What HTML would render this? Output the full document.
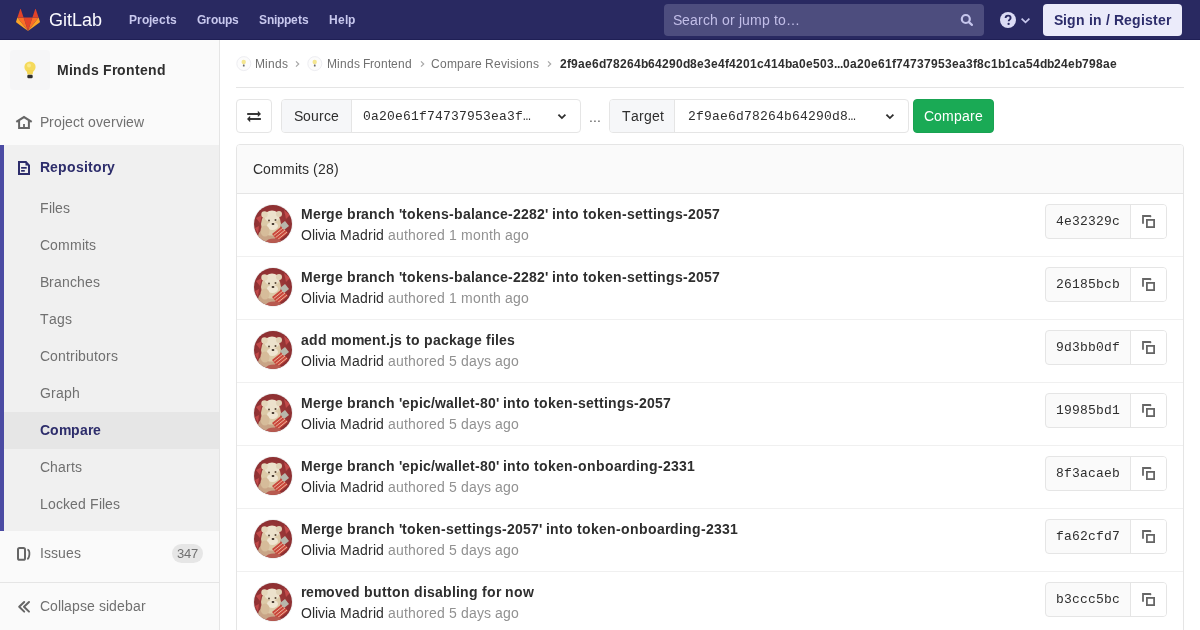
<!DOCTYPE html>
<html><head><meta charset="utf-8"><title>Compare</title>
<style>
*{box-sizing:border-box;margin:0;padding:0}
html,body{width:1200px;height:630px;overflow:hidden;background:#fff}
body{position:relative;font-family:"Liberation Sans",sans-serif}
.t{position:absolute;white-space:nowrap;line-height:20px;will-change:transform}
.t i{display:inline-block;font-style:normal;overflow:visible}
.r{position:absolute}
svg{position:absolute;overflow:visible}
</style></head><body>
<div class="r" style="left:0px;top:0px;width:1200px;height:40px;background:#292961"></div>
<div class="r" style="left:0px;top:39px;width:1200px;height:1px;background:#1f1f55"></div>
<svg style="left:16px;top:9px" width="24" height="22" viewBox="0 0 24 22">
<path fill="#e24329" d="M12 22 L16.4 8.5 H7.6 Z"/>
<path fill="#fc6d26" d="M12 22 L7.6 8.5 H1.4 Z"/>
<path fill="#fca326" d="M1.4 8.5 L0.1 12.5 C0 12.9 0.1 13.3 0.4 13.5 L12 22 Z"/>
<path fill="#e24329" d="M1.4 8.5 H7.6 L4.9 0.4 C4.8 0 4.2 0 4.1 0.4 Z"/>
<path fill="#fc6d26" d="M12 22 L16.4 8.5 H22.6 Z"/>
<path fill="#fca326" d="M22.6 8.5 L23.9 12.5 C24 12.9 23.9 13.3 23.6 13.5 L12 22 Z"/>
<path fill="#e24329" d="M22.6 8.5 H16.4 L19.1 0.4 C19.2 0 19.8 0 19.9 0.4 Z"/>
</svg>
<div class="t" style="left:49px;top:10px;font-size:18px;color:#fafaff;font-weight:normal;font-family:'Liberation Sans', sans-serif;"><i style="width:14px">G</i><i style="width:4px">i</i><i style="width:5px">t</i><i style="width:10px">L</i><i style="width:10px">a</i><i style="width:10px">b</i></div>
<div class="t" style="left:129px;top:10px;font-size:12px;color:#c8c8ee;font-weight:bold;font-family:'Liberation Sans', sans-serif;"><i style="width:8px">P</i><i style="width:5px">r</i><i style="width:7px">o</i><i style="width:3px">j</i><i style="width:7px">e</i><i style="width:7px">c</i><i style="width:4px">t</i><i style="width:7px">s</i></div>
<div class="t" style="left:197px;top:10px;font-size:12px;color:#c8c8ee;font-weight:bold;font-family:'Liberation Sans', sans-serif;"><i style="width:9px">G</i><i style="width:5px">r</i><i style="width:7px">o</i><i style="width:7px">u</i><i style="width:7px">p</i><i style="width:7px">s</i></div>
<div class="t" style="left:259px;top:10px;font-size:12px;color:#c8c8ee;font-weight:bold;font-family:'Liberation Sans', sans-serif;"><i style="width:8px">S</i><i style="width:7px">n</i><i style="width:3px">i</i><i style="width:7px">p</i><i style="width:7px">p</i><i style="width:7px">e</i><i style="width:4px">t</i><i style="width:7px">s</i></div>
<div class="t" style="left:329px;top:10px;font-size:12px;color:#c8c8ee;font-weight:bold;font-family:'Liberation Sans', sans-serif;"><i style="width:9px">H</i><i style="width:7px">e</i><i style="width:3px">l</i><i style="width:7px">p</i></div>
<div class="r" style="left:664px;top:4px;width:320px;height:32px;background:#4d4d7e;border-radius:4px"></div>
<div class="t" style="left:673px;top:10px;font-size:14px;color:#c2bee8;font-weight:normal;font-family:'Liberation Sans', sans-serif;"><i style="width:9px">S</i><i style="width:8px">e</i><i style="width:8px">a</i><i style="width:5px">r</i><i style="width:7px">c</i><i style="width:8px">h</i><i style="width:4px">&nbsp;</i><i style="width:8px">o</i><i style="width:5px">r</i><i style="width:4px">&nbsp;</i><i style="width:3px">j</i><i style="width:8px">u</i><i style="width:12px">m</i><i style="width:8px">p</i><i style="width:4px">&nbsp;</i><i style="width:4px">t</i><i style="width:8px">o</i><i style="width:14px">…</i></div>
<svg style="left:960px;top:13px" width="14" height="14" viewBox="0 0 14 14">
<circle cx="5.8" cy="6" r="4" fill="none" stroke="#c6c6ec" stroke-width="2.2"/>
<path d="M8.9 9.1 L11.9 11.9" stroke="#c6c6ec" stroke-width="2.2" stroke-linecap="round"/>
</svg>
<svg style="left:1000px;top:12px" width="32" height="16" viewBox="0 0 32 16">
<circle cx="8" cy="8" r="8" fill="#dcdcf5"/>
<path d="M5.6 6.1 C5.6 4.6 6.7 3.6 8.1 3.6 C9.6 3.6 10.6 4.6 10.6 5.9 C10.6 7.6 8.7 7.7 8.7 9.3" fill="none" stroke="#292961" stroke-width="1.9" stroke-linecap="butt"/>
<circle cx="8.6" cy="11.9" r="1.15" fill="#292961"/>
<path d="M21.6 6.6 L25.5 10.4 L29.4 6.6" fill="none" stroke="#c6c6ec" stroke-width="1.7"/>
</svg>
<div class="r" style="left:1043px;top:4px;width:139px;height:32px;background:#ebebfa;border-radius:4px"></div>
<div class="t" style="left:1054px;top:10px;font-size:14px;color:#2d2d6b;font-weight:bold;font-family:'Liberation Sans', sans-serif;"><i style="width:9px">S</i><i style="width:4px">i</i><i style="width:9px">g</i><i style="width:9px">n</i><i style="width:4px">&nbsp;</i><i style="width:4px">i</i><i style="width:9px">n</i><i style="width:4px">&nbsp;</i><i style="width:4px">/</i><i style="width:4px">&nbsp;</i><i style="width:10px">R</i><i style="width:8px">e</i><i style="width:9px">g</i><i style="width:4px">i</i><i style="width:8px">s</i><i style="width:5px">t</i><i style="width:8px">e</i><i style="width:5px">r</i></div>
<div class="r" style="left:0px;top:40px;width:220px;height:590px;background:#fafafa;border-right:1px solid #e5e5e5"></div>
<div class="r" style="left:10px;top:50px;width:40px;height:40px;background:#f6f6f7;border-radius:4px"></div>
<svg style="left:22px;top:60px" width="16" height="20" viewBox="0 0 16 20">
<circle cx="8" cy="7" r="5.6" fill="#f5da5c"/>
<path d="M4.6 10 L11.4 10 L10.6 14.6 L5.4 14.6 Z" fill="#f2d452"/>
<circle cx="7" cy="5.4" r="2" fill="#fbe98a"/>
<rect x="5.3" y="14.8" width="5.4" height="3.4" rx="1.2" fill="#2e2e2e"/>
</svg>
<div class="t" style="left:57px;top:60px;font-size:14px;color:#2e2e2e;font-weight:bold;font-family:'Liberation Sans', sans-serif;"><i style="width:12px">M</i><i style="width:4px">i</i><i style="width:9px">n</i><i style="width:9px">d</i><i style="width:8px">s</i><i style="width:4px">&nbsp;</i><i style="width:9px">F</i><i style="width:5px">r</i><i style="width:9px">o</i><i style="width:9px">n</i><i style="width:5px">t</i><i style="width:8px">e</i><i style="width:9px">n</i><i style="width:9px">d</i></div>
<svg style="left:12px;top:110px" width="24" height="24" viewBox="0 0 24 24">
<path d="M4.3 11.8 L12 7 L19.7 11.8" fill="none" stroke="#666" stroke-width="2.1" stroke-linejoin="miter"/>
<path d="M7.1 10.2 V18 H16.9 V10.2" fill="none" stroke="#666" stroke-width="2"/>
<rect x="11.1" y="14" width="1.8" height="4" fill="#666"/>
</svg>
<div class="t" style="left:40px;top:112px;font-size:14px;color:#707070;font-weight:normal;font-family:'Liberation Sans', sans-serif;"><i style="width:9px">P</i><i style="width:5px">r</i><i style="width:8px">o</i><i style="width:3px">j</i><i style="width:8px">e</i><i style="width:7px">c</i><i style="width:4px">t</i><i style="width:4px">&nbsp;</i><i style="width:8px">o</i><i style="width:7px">v</i><i style="width:8px">e</i><i style="width:5px">r</i><i style="width:7px">v</i><i style="width:3px">i</i><i style="width:8px">e</i><i style="width:10px">w</i></div>
<div class="r" style="left:0px;top:145px;width:219px;height:386px;background:#f0f0f0"></div>
<div class="r" style="left:0px;top:145px;width:4px;height:386px;background:#4b4ba3"></div>
<svg style="left:12px;top:156px" width="24" height="24" viewBox="0 0 24 24">
<path d="M7 6 H13.9 L17 9.3 V18 H7 Z" fill="none" stroke="#2d2d6b" stroke-width="2" stroke-linejoin="miter"/>
<path d="M13.5 5.5 L17.5 9.5 L13.5 9.5 Z" fill="#2d2d6b"/>
<rect x="9.1" y="11" width="5.6" height="1.7" fill="#2d2d6b"/>
<rect x="9.1" y="14" width="3.7" height="1.7" fill="#2d2d6b"/>
</svg>
<div class="t" style="left:40px;top:157px;font-size:14px;color:#2d2d6b;font-weight:bold;font-family:'Liberation Sans', sans-serif;"><i style="width:10px">R</i><i style="width:8px">e</i><i style="width:9px">p</i><i style="width:9px">o</i><i style="width:8px">s</i><i style="width:4px">i</i><i style="width:5px">t</i><i style="width:9px">o</i><i style="width:5px">r</i><i style="width:8px">y</i></div>
<div class="r" style="left:4px;top:412px;width:215px;height:37px;background:#e6e6e6"></div>
<div class="t" style="left:40px;top:198px;font-size:14px;color:#707070;font-weight:normal;font-family:'Liberation Sans', sans-serif;"><i style="width:9px">F</i><i style="width:3px">i</i><i style="width:3px">l</i><i style="width:8px">e</i><i style="width:7px">s</i></div>
<div class="t" style="left:40px;top:235px;font-size:14px;color:#707070;font-weight:normal;font-family:'Liberation Sans', sans-serif;"><i style="width:10px">C</i><i style="width:8px">o</i><i style="width:12px">m</i><i style="width:12px">m</i><i style="width:3px">i</i><i style="width:4px">t</i><i style="width:7px">s</i></div>
<div class="t" style="left:40px;top:272px;font-size:14px;color:#707070;font-weight:normal;font-family:'Liberation Sans', sans-serif;"><i style="width:9px">B</i><i style="width:5px">r</i><i style="width:8px">a</i><i style="width:8px">n</i><i style="width:7px">c</i><i style="width:8px">h</i><i style="width:8px">e</i><i style="width:7px">s</i></div>
<div class="t" style="left:40px;top:309px;font-size:14px;color:#707070;font-weight:normal;font-family:'Liberation Sans', sans-serif;"><i style="width:9px">T</i><i style="width:8px">a</i><i style="width:8px">g</i><i style="width:7px">s</i></div>
<div class="t" style="left:40px;top:346px;font-size:14px;color:#707070;font-weight:normal;font-family:'Liberation Sans', sans-serif;"><i style="width:10px">C</i><i style="width:8px">o</i><i style="width:8px">n</i><i style="width:4px">t</i><i style="width:5px">r</i><i style="width:3px">i</i><i style="width:8px">b</i><i style="width:8px">u</i><i style="width:4px">t</i><i style="width:8px">o</i><i style="width:5px">r</i><i style="width:7px">s</i></div>
<div class="t" style="left:40px;top:383px;font-size:14px;color:#707070;font-weight:normal;font-family:'Liberation Sans', sans-serif;"><i style="width:11px">G</i><i style="width:5px">r</i><i style="width:8px">a</i><i style="width:8px">p</i><i style="width:8px">h</i></div>
<div class="t" style="left:40px;top:420px;font-size:14px;color:#2d2d6b;font-weight:bold;font-family:'Liberation Sans', sans-serif;"><i style="width:10px">C</i><i style="width:9px">o</i><i style="width:12px">m</i><i style="width:9px">p</i><i style="width:8px">a</i><i style="width:5px">r</i><i style="width:8px">e</i></div>
<div class="t" style="left:40px;top:457px;font-size:14px;color:#707070;font-weight:normal;font-family:'Liberation Sans', sans-serif;"><i style="width:10px">C</i><i style="width:8px">h</i><i style="width:8px">a</i><i style="width:5px">r</i><i style="width:4px">t</i><i style="width:7px">s</i></div>
<div class="t" style="left:40px;top:494px;font-size:14px;color:#707070;font-weight:normal;font-family:'Liberation Sans', sans-serif;"><i style="width:8px">L</i><i style="width:8px">o</i><i style="width:7px">c</i><i style="width:7px">k</i><i style="width:8px">e</i><i style="width:8px">d</i><i style="width:4px">&nbsp;</i><i style="width:9px">F</i><i style="width:3px">i</i><i style="width:3px">l</i><i style="width:8px">e</i><i style="width:7px">s</i></div>
<svg style="left:12px;top:542px" width="24" height="24" viewBox="0 0 24 24">
<rect x="6" y="6" width="7" height="11.8" rx="1.6" fill="none" stroke="#666" stroke-width="2"/>
<path d="M15.4 7.6 C17.4 8 17.6 9.5 17.4 12.3 C17.2 15.3 16.8 16.6 15.3 17.2" fill="none" stroke="#666" stroke-width="1.8"/>
</svg>
<div class="t" style="left:40px;top:543px;font-size:14px;color:#707070;font-weight:normal;font-family:'Liberation Sans', sans-serif;"><i style="width:4px">I</i><i style="width:7px">s</i><i style="width:7px">s</i><i style="width:8px">u</i><i style="width:8px">e</i><i style="width:7px">s</i></div>
<div class="r" style="left:172px;top:544px;width:31px;height:19px;background:#e6e6e6;border-radius:10px"></div>
<div class="t" style="left:177px;top:543.5px;font-size:13px;color:#707070;font-weight:normal;font-family:'Liberation Sans', sans-serif;"><i style="width:7px">3</i><i style="width:7px">4</i><i style="width:7px">7</i></div>
<div class="r" style="left:0px;top:582px;width:219px;height:1px;background:#e5e5e5"></div>
<svg style="left:12px;top:595px" width="24" height="24" viewBox="0 0 24 24">
<path d="M12.2 7 L7.2 11.8 L12.2 16.6 M17 7 L12 11.8 L17 16.6" fill="none" stroke="#666" stroke-width="2" stroke-linecap="round" stroke-linejoin="round"/>
</svg>
<div class="t" style="left:40px;top:596px;font-size:14px;color:#707070;font-weight:normal;font-family:'Liberation Sans', sans-serif;"><i style="width:10px">C</i><i style="width:8px">o</i><i style="width:3px">l</i><i style="width:3px">l</i><i style="width:8px">a</i><i style="width:8px">p</i><i style="width:7px">s</i><i style="width:8px">e</i><i style="width:4px">&nbsp;</i><i style="width:7px">s</i><i style="width:3px">i</i><i style="width:8px">d</i><i style="width:8px">e</i><i style="width:8px">b</i><i style="width:8px">a</i><i style="width:5px">r</i></div>
<svg style="left:236px;top:56px" width="16" height="16" viewBox="0 0 16 16">
<circle cx="7.8" cy="7.6" r="7" fill="#fcfcfc" stroke="#eeeef2" stroke-width="1"/>
<circle cx="7.7" cy="6" r="2.2" fill="#f4e690"/>
<rect x="6.9" y="8.4" width="1.7" height="2" rx=".5" fill="#6a6a6a"/>
</svg>
<div class="t" style="left:255px;top:54px;font-size:12px;color:#707070;font-weight:normal;font-family:'Liberation Sans', sans-serif;"><i style="width:10px">M</i><i style="width:3px">i</i><i style="width:7px">n</i><i style="width:7px">d</i><i style="width:6px">s</i></div>
<svg style="left:294.5px;top:59.5px" width="6" height="8" viewBox="0 0 6 8">
<path d="M1 1.3 L3.7 4 L1 6.7" fill="none" stroke="#a8a8a8" stroke-width="1.2"/>
</svg>
<svg style="left:307px;top:56px" width="16" height="16" viewBox="0 0 16 16">
<circle cx="7.8" cy="7.6" r="7" fill="#fcfcfc" stroke="#eeeef2" stroke-width="1"/>
<circle cx="7.7" cy="6" r="2.2" fill="#f4e690"/>
<rect x="6.9" y="8.4" width="1.7" height="2" rx=".5" fill="#6a6a6a"/>
</svg>
<div class="t" style="left:327px;top:54px;font-size:12px;color:#707070;font-weight:normal;font-family:'Liberation Sans', sans-serif;"><i style="width:10px">M</i><i style="width:3px">i</i><i style="width:7px">n</i><i style="width:7px">d</i><i style="width:6px">s</i><i style="width:3px">&nbsp;</i><i style="width:7px">F</i><i style="width:4px">r</i><i style="width:7px">o</i><i style="width:7px">n</i><i style="width:3px">t</i><i style="width:7px">e</i><i style="width:7px">n</i><i style="width:7px">d</i></div>
<svg style="left:419.5px;top:59.5px" width="6" height="8" viewBox="0 0 6 8">
<path d="M1 1.3 L3.7 4 L1 6.7" fill="none" stroke="#a8a8a8" stroke-width="1.2"/>
</svg>
<div class="t" style="left:431px;top:54px;font-size:12px;color:#707070;font-weight:normal;font-family:'Liberation Sans', sans-serif;"><i style="width:9px">C</i><i style="width:7px">o</i><i style="width:10px">m</i><i style="width:7px">p</i><i style="width:7px">a</i><i style="width:4px">r</i><i style="width:7px">e</i><i style="width:3px">&nbsp;</i><i style="width:9px">R</i><i style="width:7px">e</i><i style="width:6px">v</i><i style="width:3px">i</i><i style="width:6px">s</i><i style="width:3px">i</i><i style="width:7px">o</i><i style="width:7px">n</i><i style="width:6px">s</i></div>
<svg style="left:546.5px;top:59.5px" width="6" height="8" viewBox="0 0 6 8">
<path d="M1 1.3 L3.7 4 L1 6.7" fill="none" stroke="#a8a8a8" stroke-width="1.2"/>
</svg>
<div class="t" style="left:560px;top:54px;font-size:12px;color:#2e2e2e;font-weight:bold;font-family:'Liberation Sans', sans-serif;"><i style="width:7px">2</i><i style="width:4px">f</i><i style="width:7px">9</i><i style="width:7px">a</i><i style="width:7px">e</i><i style="width:7px">6</i><i style="width:7px">d</i><i style="width:7px">7</i><i style="width:7px">8</i><i style="width:7px">2</i><i style="width:7px">6</i><i style="width:7px">4</i><i style="width:7px">b</i><i style="width:7px">6</i><i style="width:7px">4</i><i style="width:7px">2</i><i style="width:7px">9</i><i style="width:7px">0</i><i style="width:7px">d</i><i style="width:7px">8</i><i style="width:7px">e</i><i style="width:7px">3</i><i style="width:7px">e</i><i style="width:7px">4</i><i style="width:4px">f</i><i style="width:7px">4</i><i style="width:7px">2</i><i style="width:7px">0</i><i style="width:7px">1</i><i style="width:7px">c</i><i style="width:7px">4</i><i style="width:7px">1</i><i style="width:7px">4</i><i style="width:7px">b</i><i style="width:7px">a</i><i style="width:7px">0</i><i style="width:7px">e</i><i style="width:7px">5</i><i style="width:7px">0</i><i style="width:7px">3</i><i style="width:3px">.</i><i style="width:3px">.</i><i style="width:3px">.</i><i style="width:7px">0</i><i style="width:7px">a</i><i style="width:7px">2</i><i style="width:7px">0</i><i style="width:7px">e</i><i style="width:7px">6</i><i style="width:7px">1</i><i style="width:4px">f</i><i style="width:7px">7</i><i style="width:7px">4</i><i style="width:7px">7</i><i style="width:7px">3</i><i style="width:7px">7</i><i style="width:7px">9</i><i style="width:7px">5</i><i style="width:7px">3</i><i style="width:7px">e</i><i style="width:7px">a</i><i style="width:7px">3</i><i style="width:4px">f</i><i style="width:7px">8</i><i style="width:7px">c</i><i style="width:7px">1</i><i style="width:7px">b</i><i style="width:7px">1</i><i style="width:7px">c</i><i style="width:7px">a</i><i style="width:7px">5</i><i style="width:7px">4</i><i style="width:7px">d</i><i style="width:7px">b</i><i style="width:7px">2</i><i style="width:7px">4</i><i style="width:7px">e</i><i style="width:7px">b</i><i style="width:7px">7</i><i style="width:7px">9</i><i style="width:7px">8</i><i style="width:7px">a</i><i style="width:7px">e</i></div>
<div class="r" style="left:236px;top:87px;width:948px;height:1px;background:#e5e5e5"></div>
<div class="r" style="left:236px;top:99px;width:36px;height:34px;background:#fff;border:1px solid #e5e5e5;border-radius:4px"></div>
<svg style="left:242px;top:104px" width="24" height="24" viewBox="0 0 24 24">
<path d="M5.2 10 H16.6" stroke="#2e2e2e" stroke-width="1.9"/>
<path d="M15.8 6.8 L19 9.9 L15.8 13 Z" fill="#2e2e2e"/>
<path d="M7.4 15 H18.9" stroke="#2e2e2e" stroke-width="1.9"/>
<path d="M8.2 11.8 L5 15 L8.2 18.2 Z" fill="#2e2e2e"/>
</svg>
<div class="r" style="left:281px;top:99px;width:300px;height:34px;background:#fff;border:1px solid #e5e5e5;border-radius:4px"></div>
<div class="r" style="left:282px;top:100px;width:70px;height:32px;background:#f6f7f9;border-right:1px solid #e5e5e5;border-radius:3px 0 0 3px"></div>
<div class="t" style="left:294px;top:106px;font-size:14px;color:#2e2e2e;font-weight:normal;font-family:'Liberation Sans', sans-serif;"><i style="width:9px">S</i><i style="width:8px">o</i><i style="width:8px">u</i><i style="width:5px">r</i><i style="width:7px">c</i><i style="width:8px">e</i></div>
<div class="t" style="left:363px;top:107px;font-size:13px;color:#2e2e2e;font-weight:normal;font-family:'Liberation Mono', monospace;"><i style="width:8px">0</i><i style="width:8px">a</i><i style="width:8px">2</i><i style="width:8px">0</i><i style="width:8px">e</i><i style="width:8px">6</i><i style="width:8px">1</i><i style="width:8px">f</i><i style="width:8px">7</i><i style="width:8px">4</i><i style="width:8px">7</i><i style="width:8px">3</i><i style="width:8px">7</i><i style="width:8px">9</i><i style="width:8px">5</i><i style="width:8px">3</i><i style="width:8px">e</i><i style="width:8px">a</i><i style="width:8px">3</i><i style="width:8px">f</i><i style="width:8px">…</i></div>
<svg style="left:557px;top:112.5px" width="10" height="8" viewBox="0 0 10 8">
<path d="M1.4 1.6 L4.9 5.1 L8.4 1.6" fill="none" stroke="#2e2e2e" stroke-width="1.8"/>
</svg>
<div class="t" style="left:589px;top:106.5px;font-size:14px;color:#5c5c5c;font-weight:normal;font-family:'Liberation Sans', sans-serif;"><i style="width:4px">.</i><i style="width:4px">.</i><i style="width:4px">.</i></div>
<div class="r" style="left:609px;top:99px;width:300px;height:34px;background:#fff;border:1px solid #e5e5e5;border-radius:4px"></div>
<div class="r" style="left:610px;top:100px;width:65px;height:32px;background:#f6f7f9;border-right:1px solid #e5e5e5;border-radius:3px 0 0 3px"></div>
<div class="t" style="left:622px;top:106px;font-size:14px;color:#2e2e2e;font-weight:normal;font-family:'Liberation Sans', sans-serif;"><i style="width:9px">T</i><i style="width:8px">a</i><i style="width:5px">r</i><i style="width:8px">g</i><i style="width:8px">e</i><i style="width:4px">t</i></div>
<div class="t" style="left:688px;top:107px;font-size:13px;color:#2e2e2e;font-weight:normal;font-family:'Liberation Mono', monospace;"><i style="width:8px">2</i><i style="width:8px">f</i><i style="width:8px">9</i><i style="width:8px">a</i><i style="width:8px">e</i><i style="width:8px">6</i><i style="width:8px">d</i><i style="width:8px">7</i><i style="width:8px">8</i><i style="width:8px">2</i><i style="width:8px">6</i><i style="width:8px">4</i><i style="width:8px">b</i><i style="width:8px">6</i><i style="width:8px">4</i><i style="width:8px">2</i><i style="width:8px">9</i><i style="width:8px">0</i><i style="width:8px">d</i><i style="width:8px">8</i><i style="width:8px">…</i></div>
<svg style="left:885px;top:112.5px" width="10" height="8" viewBox="0 0 10 8">
<path d="M1.4 1.6 L4.9 5.1 L8.4 1.6" fill="none" stroke="#2e2e2e" stroke-width="1.8"/>
</svg>
<div class="r" style="left:913px;top:99px;width:81px;height:34px;background:#1aaa55;border:1px solid #19a352;border-radius:4px"></div>
<div class="t" style="left:924px;top:106px;font-size:14px;color:#fff;font-weight:normal;font-family:'Liberation Sans', sans-serif;"><i style="width:10px">C</i><i style="width:8px">o</i><i style="width:12px">m</i><i style="width:8px">p</i><i style="width:8px">a</i><i style="width:5px">r</i><i style="width:8px">e</i></div>
<div class="r" style="left:236px;top:144px;width:948px;height:500px;background:#fff;border:1px solid #e5e5e5;border-radius:4px"></div>
<div class="r" style="left:237px;top:145px;width:946px;height:48px;background:#fafafa;border-radius:3px 3px 0 0"></div>
<div class="r" style="left:237px;top:193px;width:946px;height:1px;background:#e5e5e5"></div>
<div class="t" style="left:253px;top:159px;font-size:14px;color:#2e2e2e;font-weight:normal;font-family:'Liberation Sans', sans-serif;"><i style="width:10px">C</i><i style="width:8px">o</i><i style="width:12px">m</i><i style="width:12px">m</i><i style="width:3px">i</i><i style="width:4px">t</i><i style="width:7px">s</i><i style="width:4px">&nbsp;</i><i style="width:5px">(</i><i style="width:8px">2</i><i style="width:8px">8</i><i style="width:5px">)</i></div>
<svg style="left:253px;top:204px" width="40" height="40" viewBox="0 0 40 40">
<defs><clipPath id="c0"><circle cx="20" cy="20" r="19"/></clipPath>
<filter id="f0" x="-10%" y="-10%" width="120%" height="120%"><feGaussianBlur stdDeviation="0.5"/></filter>
<radialGradient id="g0" cx="0.5" cy="0.5" r="0.6"><stop offset="0" stop-color="#a8403e"/><stop offset="0.75" stop-color="#8e3032"/><stop offset="1" stop-color="#6a1c1e"/></radialGradient></defs>
<g clip-path="url(#c0)">
<rect x="0" y="0" width="40" height="40" fill="url(#g0)"/>
<g filter="url(#f0)">
<path d="M3 14 L9 11 L7 19 Z M31 6 L37 11 L33 15 Z M2 24 L6 22 L5 30 Z" fill="#c04848"/>
<ellipse cx="14" cy="32" rx="9" ry="7" fill="#c8a486"/>
<ellipse cx="18" cy="20" rx="10" ry="11.5" fill="#dccaa8"/>
<ellipse cx="19" cy="12.5" rx="7.5" ry="6" fill="#ece2cc"/>
<circle cx="11.5" cy="10.5" r="3.2" fill="#e4d6ba"/>
<circle cx="26" cy="10" r="3" fill="#e0d2b6"/>
<ellipse cx="19.5" cy="22" rx="5.5" ry="4" fill="#f0e6d2"/>
<circle cx="16" cy="16.5" r="1" fill="#5a4838"/>
<circle cx="22.5" cy="16" r="1" fill="#5a4838"/>
<ellipse cx="20" cy="20" rx="1.4" ry="1.1" fill="#3a2a22"/>
<ellipse cx="12" cy="27" rx="4.5" ry="5.5" fill="#d6bc9a"/>
<path d="M19 30 L29 22 L35 29 L25 37 Z" fill="#c8463a"/>
<path d="M20.6 31.6 L30 24 M22.6 33.6 L32 26 M24.6 35.6 L34 28" stroke="#eeb49c" stroke-width="1"/>
<path d="M27 21 L32 17 L36 22 L31 26 Z" fill="#b8b8ac"/>
<ellipse cx="21" cy="38" rx="8" ry="3.5" fill="#b85a50"/>
</g></g>
<circle cx="20" cy="20" r="19.5" fill="none" stroke="rgba(0,0,0,0.06)" stroke-width="1"/>
</svg>
<div class="t" style="left:301px;top:204px;font-size:14px;color:#2e2e2e;font-weight:bold;font-family:'Liberation Sans', sans-serif;"><i style="width:12px">M</i><i style="width:8px">e</i><i style="width:5px">r</i><i style="width:9px">g</i><i style="width:8px">e</i><i style="width:4px">&nbsp;</i><i style="width:9px">b</i><i style="width:5px">r</i><i style="width:8px">a</i><i style="width:9px">n</i><i style="width:8px">c</i><i style="width:9px">h</i><i style="width:4px">&nbsp;</i><i style="width:3px">&#x27;</i><i style="width:5px">t</i><i style="width:9px">o</i><i style="width:8px">k</i><i style="width:8px">e</i><i style="width:9px">n</i><i style="width:8px">s</i><i style="width:5px">-</i><i style="width:9px">b</i><i style="width:8px">a</i><i style="width:4px">l</i><i style="width:8px">a</i><i style="width:9px">n</i><i style="width:8px">c</i><i style="width:8px">e</i><i style="width:5px">-</i><i style="width:8px">2</i><i style="width:8px">2</i><i style="width:8px">8</i><i style="width:8px">2</i><i style="width:3px">&#x27;</i><i style="width:4px">&nbsp;</i><i style="width:4px">i</i><i style="width:9px">n</i><i style="width:5px">t</i><i style="width:9px">o</i><i style="width:4px">&nbsp;</i><i style="width:5px">t</i><i style="width:9px">o</i><i style="width:8px">k</i><i style="width:8px">e</i><i style="width:9px">n</i><i style="width:5px">-</i><i style="width:8px">s</i><i style="width:8px">e</i><i style="width:5px">t</i><i style="width:5px">t</i><i style="width:4px">i</i><i style="width:9px">n</i><i style="width:9px">g</i><i style="width:8px">s</i><i style="width:5px">-</i><i style="width:8px">2</i><i style="width:8px">0</i><i style="width:8px">5</i><i style="width:8px">7</i></div>
<div class="t" style="left:301px;top:225px;font-size:14px;color:#2e2e2e;font-weight:normal;font-family:'Liberation Sans', sans-serif;"><i style="width:11px">O</i><i style="width:3px">l</i><i style="width:3px">i</i><i style="width:7px">v</i><i style="width:3px">i</i><i style="width:8px">a</i><i style="width:4px">&nbsp;</i><i style="width:12px">M</i><i style="width:8px">a</i><i style="width:8px">d</i><i style="width:5px">r</i><i style="width:3px">i</i><i style="width:8px">d</i><i style="width:4px">&nbsp;</i><b style="color:#919191;font-weight:inherit"><i style="width:8px">a</i><i style="width:8px">u</i><i style="width:4px">t</i><i style="width:8px">h</i><i style="width:8px">o</i><i style="width:5px">r</i><i style="width:8px">e</i><i style="width:8px">d</i><i style="width:4px">&nbsp;</i><i style="width:8px">1</i><i style="width:4px">&nbsp;</i><i style="width:12px">m</i><i style="width:8px">o</i><i style="width:8px">n</i><i style="width:4px">t</i><i style="width:8px">h</i><i style="width:4px">&nbsp;</i><i style="width:8px">a</i><i style="width:8px">g</i><i style="width:8px">o</i></b></div>
<div class="r" style="left:1045px;top:204px;width:122px;height:35px;background:#fafafa;border:1px solid #e5e5e5;border-radius:4px"></div>
<div class="r" style="left:1130px;top:205px;width:36px;height:33px;background:#fff;border-left:1px solid #e5e5e5;border-radius:0 3px 3px 0"></div>
<div class="t" style="left:1056px;top:212px;font-size:13px;color:#2e2e2e;font-weight:normal;font-family:'Liberation Mono', monospace;"><i style="width:8px">4</i><i style="width:8px">e</i><i style="width:8px">3</i><i style="width:8px">2</i><i style="width:8px">3</i><i style="width:8px">2</i><i style="width:8px">9</i><i style="width:8px">c</i></div>
<svg style="left:1136px;top:209px" width="24" height="24" viewBox="0 0 24 24">
<path d="M7 14.7 V7 H14.2 L14.9 7.9" fill="none" stroke="#666" stroke-width="1.8"/>
<rect x="10.9" y="10.9" width="7.2" height="7.2" fill="none" stroke="#666" stroke-width="1.8"/>
</svg>
<div class="r" style="left:237px;top:256px;width:946px;height:1px;background:#f0f0f0"></div>
<svg style="left:253px;top:267px" width="40" height="40" viewBox="0 0 40 40">
<defs><clipPath id="c1"><circle cx="20" cy="20" r="19"/></clipPath>
<filter id="f1" x="-10%" y="-10%" width="120%" height="120%"><feGaussianBlur stdDeviation="0.5"/></filter>
<radialGradient id="g1" cx="0.5" cy="0.5" r="0.6"><stop offset="0" stop-color="#a8403e"/><stop offset="0.75" stop-color="#8e3032"/><stop offset="1" stop-color="#6a1c1e"/></radialGradient></defs>
<g clip-path="url(#c1)">
<rect x="0" y="0" width="40" height="40" fill="url(#g1)"/>
<g filter="url(#f1)">
<path d="M3 14 L9 11 L7 19 Z M31 6 L37 11 L33 15 Z M2 24 L6 22 L5 30 Z" fill="#c04848"/>
<ellipse cx="14" cy="32" rx="9" ry="7" fill="#c8a486"/>
<ellipse cx="18" cy="20" rx="10" ry="11.5" fill="#dccaa8"/>
<ellipse cx="19" cy="12.5" rx="7.5" ry="6" fill="#ece2cc"/>
<circle cx="11.5" cy="10.5" r="3.2" fill="#e4d6ba"/>
<circle cx="26" cy="10" r="3" fill="#e0d2b6"/>
<ellipse cx="19.5" cy="22" rx="5.5" ry="4" fill="#f0e6d2"/>
<circle cx="16" cy="16.5" r="1" fill="#5a4838"/>
<circle cx="22.5" cy="16" r="1" fill="#5a4838"/>
<ellipse cx="20" cy="20" rx="1.4" ry="1.1" fill="#3a2a22"/>
<ellipse cx="12" cy="27" rx="4.5" ry="5.5" fill="#d6bc9a"/>
<path d="M19 30 L29 22 L35 29 L25 37 Z" fill="#c8463a"/>
<path d="M20.6 31.6 L30 24 M22.6 33.6 L32 26 M24.6 35.6 L34 28" stroke="#eeb49c" stroke-width="1"/>
<path d="M27 21 L32 17 L36 22 L31 26 Z" fill="#b8b8ac"/>
<ellipse cx="21" cy="38" rx="8" ry="3.5" fill="#b85a50"/>
</g></g>
<circle cx="20" cy="20" r="19.5" fill="none" stroke="rgba(0,0,0,0.06)" stroke-width="1"/>
</svg>
<div class="t" style="left:301px;top:267px;font-size:14px;color:#2e2e2e;font-weight:bold;font-family:'Liberation Sans', sans-serif;"><i style="width:12px">M</i><i style="width:8px">e</i><i style="width:5px">r</i><i style="width:9px">g</i><i style="width:8px">e</i><i style="width:4px">&nbsp;</i><i style="width:9px">b</i><i style="width:5px">r</i><i style="width:8px">a</i><i style="width:9px">n</i><i style="width:8px">c</i><i style="width:9px">h</i><i style="width:4px">&nbsp;</i><i style="width:3px">&#x27;</i><i style="width:5px">t</i><i style="width:9px">o</i><i style="width:8px">k</i><i style="width:8px">e</i><i style="width:9px">n</i><i style="width:8px">s</i><i style="width:5px">-</i><i style="width:9px">b</i><i style="width:8px">a</i><i style="width:4px">l</i><i style="width:8px">a</i><i style="width:9px">n</i><i style="width:8px">c</i><i style="width:8px">e</i><i style="width:5px">-</i><i style="width:8px">2</i><i style="width:8px">2</i><i style="width:8px">8</i><i style="width:8px">2</i><i style="width:3px">&#x27;</i><i style="width:4px">&nbsp;</i><i style="width:4px">i</i><i style="width:9px">n</i><i style="width:5px">t</i><i style="width:9px">o</i><i style="width:4px">&nbsp;</i><i style="width:5px">t</i><i style="width:9px">o</i><i style="width:8px">k</i><i style="width:8px">e</i><i style="width:9px">n</i><i style="width:5px">-</i><i style="width:8px">s</i><i style="width:8px">e</i><i style="width:5px">t</i><i style="width:5px">t</i><i style="width:4px">i</i><i style="width:9px">n</i><i style="width:9px">g</i><i style="width:8px">s</i><i style="width:5px">-</i><i style="width:8px">2</i><i style="width:8px">0</i><i style="width:8px">5</i><i style="width:8px">7</i></div>
<div class="t" style="left:301px;top:288px;font-size:14px;color:#2e2e2e;font-weight:normal;font-family:'Liberation Sans', sans-serif;"><i style="width:11px">O</i><i style="width:3px">l</i><i style="width:3px">i</i><i style="width:7px">v</i><i style="width:3px">i</i><i style="width:8px">a</i><i style="width:4px">&nbsp;</i><i style="width:12px">M</i><i style="width:8px">a</i><i style="width:8px">d</i><i style="width:5px">r</i><i style="width:3px">i</i><i style="width:8px">d</i><i style="width:4px">&nbsp;</i><b style="color:#919191;font-weight:inherit"><i style="width:8px">a</i><i style="width:8px">u</i><i style="width:4px">t</i><i style="width:8px">h</i><i style="width:8px">o</i><i style="width:5px">r</i><i style="width:8px">e</i><i style="width:8px">d</i><i style="width:4px">&nbsp;</i><i style="width:8px">1</i><i style="width:4px">&nbsp;</i><i style="width:12px">m</i><i style="width:8px">o</i><i style="width:8px">n</i><i style="width:4px">t</i><i style="width:8px">h</i><i style="width:4px">&nbsp;</i><i style="width:8px">a</i><i style="width:8px">g</i><i style="width:8px">o</i></b></div>
<div class="r" style="left:1045px;top:267px;width:122px;height:35px;background:#fafafa;border:1px solid #e5e5e5;border-radius:4px"></div>
<div class="r" style="left:1130px;top:268px;width:36px;height:33px;background:#fff;border-left:1px solid #e5e5e5;border-radius:0 3px 3px 0"></div>
<div class="t" style="left:1056px;top:275px;font-size:13px;color:#2e2e2e;font-weight:normal;font-family:'Liberation Mono', monospace;"><i style="width:8px">2</i><i style="width:8px">6</i><i style="width:8px">1</i><i style="width:8px">8</i><i style="width:8px">5</i><i style="width:8px">b</i><i style="width:8px">c</i><i style="width:8px">b</i></div>
<svg style="left:1136px;top:272px" width="24" height="24" viewBox="0 0 24 24">
<path d="M7 14.7 V7 H14.2 L14.9 7.9" fill="none" stroke="#666" stroke-width="1.8"/>
<rect x="10.9" y="10.9" width="7.2" height="7.2" fill="none" stroke="#666" stroke-width="1.8"/>
</svg>
<div class="r" style="left:237px;top:319px;width:946px;height:1px;background:#f0f0f0"></div>
<svg style="left:253px;top:330px" width="40" height="40" viewBox="0 0 40 40">
<defs><clipPath id="c2"><circle cx="20" cy="20" r="19"/></clipPath>
<filter id="f2" x="-10%" y="-10%" width="120%" height="120%"><feGaussianBlur stdDeviation="0.5"/></filter>
<radialGradient id="g2" cx="0.5" cy="0.5" r="0.6"><stop offset="0" stop-color="#a8403e"/><stop offset="0.75" stop-color="#8e3032"/><stop offset="1" stop-color="#6a1c1e"/></radialGradient></defs>
<g clip-path="url(#c2)">
<rect x="0" y="0" width="40" height="40" fill="url(#g2)"/>
<g filter="url(#f2)">
<path d="M3 14 L9 11 L7 19 Z M31 6 L37 11 L33 15 Z M2 24 L6 22 L5 30 Z" fill="#c04848"/>
<ellipse cx="14" cy="32" rx="9" ry="7" fill="#c8a486"/>
<ellipse cx="18" cy="20" rx="10" ry="11.5" fill="#dccaa8"/>
<ellipse cx="19" cy="12.5" rx="7.5" ry="6" fill="#ece2cc"/>
<circle cx="11.5" cy="10.5" r="3.2" fill="#e4d6ba"/>
<circle cx="26" cy="10" r="3" fill="#e0d2b6"/>
<ellipse cx="19.5" cy="22" rx="5.5" ry="4" fill="#f0e6d2"/>
<circle cx="16" cy="16.5" r="1" fill="#5a4838"/>
<circle cx="22.5" cy="16" r="1" fill="#5a4838"/>
<ellipse cx="20" cy="20" rx="1.4" ry="1.1" fill="#3a2a22"/>
<ellipse cx="12" cy="27" rx="4.5" ry="5.5" fill="#d6bc9a"/>
<path d="M19 30 L29 22 L35 29 L25 37 Z" fill="#c8463a"/>
<path d="M20.6 31.6 L30 24 M22.6 33.6 L32 26 M24.6 35.6 L34 28" stroke="#eeb49c" stroke-width="1"/>
<path d="M27 21 L32 17 L36 22 L31 26 Z" fill="#b8b8ac"/>
<ellipse cx="21" cy="38" rx="8" ry="3.5" fill="#b85a50"/>
</g></g>
<circle cx="20" cy="20" r="19.5" fill="none" stroke="rgba(0,0,0,0.06)" stroke-width="1"/>
</svg>
<div class="t" style="left:301px;top:330px;font-size:14px;color:#2e2e2e;font-weight:bold;font-family:'Liberation Sans', sans-serif;"><i style="width:8px">a</i><i style="width:9px">d</i><i style="width:9px">d</i><i style="width:4px">&nbsp;</i><i style="width:12px">m</i><i style="width:9px">o</i><i style="width:12px">m</i><i style="width:8px">e</i><i style="width:9px">n</i><i style="width:5px">t</i><i style="width:4px">.</i><i style="width:4px">j</i><i style="width:8px">s</i><i style="width:4px">&nbsp;</i><i style="width:5px">t</i><i style="width:9px">o</i><i style="width:4px">&nbsp;</i><i style="width:9px">p</i><i style="width:8px">a</i><i style="width:8px">c</i><i style="width:8px">k</i><i style="width:8px">a</i><i style="width:9px">g</i><i style="width:8px">e</i><i style="width:4px">&nbsp;</i><i style="width:5px">f</i><i style="width:4px">i</i><i style="width:4px">l</i><i style="width:8px">e</i><i style="width:8px">s</i></div>
<div class="t" style="left:301px;top:351px;font-size:14px;color:#2e2e2e;font-weight:normal;font-family:'Liberation Sans', sans-serif;"><i style="width:11px">O</i><i style="width:3px">l</i><i style="width:3px">i</i><i style="width:7px">v</i><i style="width:3px">i</i><i style="width:8px">a</i><i style="width:4px">&nbsp;</i><i style="width:12px">M</i><i style="width:8px">a</i><i style="width:8px">d</i><i style="width:5px">r</i><i style="width:3px">i</i><i style="width:8px">d</i><i style="width:4px">&nbsp;</i><b style="color:#919191;font-weight:inherit"><i style="width:8px">a</i><i style="width:8px">u</i><i style="width:4px">t</i><i style="width:8px">h</i><i style="width:8px">o</i><i style="width:5px">r</i><i style="width:8px">e</i><i style="width:8px">d</i><i style="width:4px">&nbsp;</i><i style="width:8px">5</i><i style="width:4px">&nbsp;</i><i style="width:8px">d</i><i style="width:8px">a</i><i style="width:7px">y</i><i style="width:7px">s</i><i style="width:4px">&nbsp;</i><i style="width:8px">a</i><i style="width:8px">g</i><i style="width:8px">o</i></b></div>
<div class="r" style="left:1045px;top:330px;width:122px;height:35px;background:#fafafa;border:1px solid #e5e5e5;border-radius:4px"></div>
<div class="r" style="left:1130px;top:331px;width:36px;height:33px;background:#fff;border-left:1px solid #e5e5e5;border-radius:0 3px 3px 0"></div>
<div class="t" style="left:1056px;top:338px;font-size:13px;color:#2e2e2e;font-weight:normal;font-family:'Liberation Mono', monospace;"><i style="width:8px">9</i><i style="width:8px">d</i><i style="width:8px">3</i><i style="width:8px">b</i><i style="width:8px">b</i><i style="width:8px">0</i><i style="width:8px">d</i><i style="width:8px">f</i></div>
<svg style="left:1136px;top:335px" width="24" height="24" viewBox="0 0 24 24">
<path d="M7 14.7 V7 H14.2 L14.9 7.9" fill="none" stroke="#666" stroke-width="1.8"/>
<rect x="10.9" y="10.9" width="7.2" height="7.2" fill="none" stroke="#666" stroke-width="1.8"/>
</svg>
<div class="r" style="left:237px;top:382px;width:946px;height:1px;background:#f0f0f0"></div>
<svg style="left:253px;top:393px" width="40" height="40" viewBox="0 0 40 40">
<defs><clipPath id="c3"><circle cx="20" cy="20" r="19"/></clipPath>
<filter id="f3" x="-10%" y="-10%" width="120%" height="120%"><feGaussianBlur stdDeviation="0.5"/></filter>
<radialGradient id="g3" cx="0.5" cy="0.5" r="0.6"><stop offset="0" stop-color="#a8403e"/><stop offset="0.75" stop-color="#8e3032"/><stop offset="1" stop-color="#6a1c1e"/></radialGradient></defs>
<g clip-path="url(#c3)">
<rect x="0" y="0" width="40" height="40" fill="url(#g3)"/>
<g filter="url(#f3)">
<path d="M3 14 L9 11 L7 19 Z M31 6 L37 11 L33 15 Z M2 24 L6 22 L5 30 Z" fill="#c04848"/>
<ellipse cx="14" cy="32" rx="9" ry="7" fill="#c8a486"/>
<ellipse cx="18" cy="20" rx="10" ry="11.5" fill="#dccaa8"/>
<ellipse cx="19" cy="12.5" rx="7.5" ry="6" fill="#ece2cc"/>
<circle cx="11.5" cy="10.5" r="3.2" fill="#e4d6ba"/>
<circle cx="26" cy="10" r="3" fill="#e0d2b6"/>
<ellipse cx="19.5" cy="22" rx="5.5" ry="4" fill="#f0e6d2"/>
<circle cx="16" cy="16.5" r="1" fill="#5a4838"/>
<circle cx="22.5" cy="16" r="1" fill="#5a4838"/>
<ellipse cx="20" cy="20" rx="1.4" ry="1.1" fill="#3a2a22"/>
<ellipse cx="12" cy="27" rx="4.5" ry="5.5" fill="#d6bc9a"/>
<path d="M19 30 L29 22 L35 29 L25 37 Z" fill="#c8463a"/>
<path d="M20.6 31.6 L30 24 M22.6 33.6 L32 26 M24.6 35.6 L34 28" stroke="#eeb49c" stroke-width="1"/>
<path d="M27 21 L32 17 L36 22 L31 26 Z" fill="#b8b8ac"/>
<ellipse cx="21" cy="38" rx="8" ry="3.5" fill="#b85a50"/>
</g></g>
<circle cx="20" cy="20" r="19.5" fill="none" stroke="rgba(0,0,0,0.06)" stroke-width="1"/>
</svg>
<div class="t" style="left:301px;top:393px;font-size:14px;color:#2e2e2e;font-weight:bold;font-family:'Liberation Sans', sans-serif;"><i style="width:12px">M</i><i style="width:8px">e</i><i style="width:5px">r</i><i style="width:9px">g</i><i style="width:8px">e</i><i style="width:4px">&nbsp;</i><i style="width:9px">b</i><i style="width:5px">r</i><i style="width:8px">a</i><i style="width:9px">n</i><i style="width:8px">c</i><i style="width:9px">h</i><i style="width:4px">&nbsp;</i><i style="width:3px">&#x27;</i><i style="width:8px">e</i><i style="width:9px">p</i><i style="width:4px">i</i><i style="width:8px">c</i><i style="width:4px">/</i><i style="width:11px">w</i><i style="width:8px">a</i><i style="width:4px">l</i><i style="width:4px">l</i><i style="width:8px">e</i><i style="width:5px">t</i><i style="width:5px">-</i><i style="width:8px">8</i><i style="width:8px">0</i><i style="width:3px">&#x27;</i><i style="width:4px">&nbsp;</i><i style="width:4px">i</i><i style="width:9px">n</i><i style="width:5px">t</i><i style="width:9px">o</i><i style="width:4px">&nbsp;</i><i style="width:5px">t</i><i style="width:9px">o</i><i style="width:8px">k</i><i style="width:8px">e</i><i style="width:9px">n</i><i style="width:5px">-</i><i style="width:8px">s</i><i style="width:8px">e</i><i style="width:5px">t</i><i style="width:5px">t</i><i style="width:4px">i</i><i style="width:9px">n</i><i style="width:9px">g</i><i style="width:8px">s</i><i style="width:5px">-</i><i style="width:8px">2</i><i style="width:8px">0</i><i style="width:8px">5</i><i style="width:8px">7</i></div>
<div class="t" style="left:301px;top:414px;font-size:14px;color:#2e2e2e;font-weight:normal;font-family:'Liberation Sans', sans-serif;"><i style="width:11px">O</i><i style="width:3px">l</i><i style="width:3px">i</i><i style="width:7px">v</i><i style="width:3px">i</i><i style="width:8px">a</i><i style="width:4px">&nbsp;</i><i style="width:12px">M</i><i style="width:8px">a</i><i style="width:8px">d</i><i style="width:5px">r</i><i style="width:3px">i</i><i style="width:8px">d</i><i style="width:4px">&nbsp;</i><b style="color:#919191;font-weight:inherit"><i style="width:8px">a</i><i style="width:8px">u</i><i style="width:4px">t</i><i style="width:8px">h</i><i style="width:8px">o</i><i style="width:5px">r</i><i style="width:8px">e</i><i style="width:8px">d</i><i style="width:4px">&nbsp;</i><i style="width:8px">5</i><i style="width:4px">&nbsp;</i><i style="width:8px">d</i><i style="width:8px">a</i><i style="width:7px">y</i><i style="width:7px">s</i><i style="width:4px">&nbsp;</i><i style="width:8px">a</i><i style="width:8px">g</i><i style="width:8px">o</i></b></div>
<div class="r" style="left:1045px;top:393px;width:122px;height:35px;background:#fafafa;border:1px solid #e5e5e5;border-radius:4px"></div>
<div class="r" style="left:1130px;top:394px;width:36px;height:33px;background:#fff;border-left:1px solid #e5e5e5;border-radius:0 3px 3px 0"></div>
<div class="t" style="left:1056px;top:401px;font-size:13px;color:#2e2e2e;font-weight:normal;font-family:'Liberation Mono', monospace;"><i style="width:8px">1</i><i style="width:8px">9</i><i style="width:8px">9</i><i style="width:8px">8</i><i style="width:8px">5</i><i style="width:8px">b</i><i style="width:8px">d</i><i style="width:8px">1</i></div>
<svg style="left:1136px;top:398px" width="24" height="24" viewBox="0 0 24 24">
<path d="M7 14.7 V7 H14.2 L14.9 7.9" fill="none" stroke="#666" stroke-width="1.8"/>
<rect x="10.9" y="10.9" width="7.2" height="7.2" fill="none" stroke="#666" stroke-width="1.8"/>
</svg>
<div class="r" style="left:237px;top:445px;width:946px;height:1px;background:#f0f0f0"></div>
<svg style="left:253px;top:456px" width="40" height="40" viewBox="0 0 40 40">
<defs><clipPath id="c4"><circle cx="20" cy="20" r="19"/></clipPath>
<filter id="f4" x="-10%" y="-10%" width="120%" height="120%"><feGaussianBlur stdDeviation="0.5"/></filter>
<radialGradient id="g4" cx="0.5" cy="0.5" r="0.6"><stop offset="0" stop-color="#a8403e"/><stop offset="0.75" stop-color="#8e3032"/><stop offset="1" stop-color="#6a1c1e"/></radialGradient></defs>
<g clip-path="url(#c4)">
<rect x="0" y="0" width="40" height="40" fill="url(#g4)"/>
<g filter="url(#f4)">
<path d="M3 14 L9 11 L7 19 Z M31 6 L37 11 L33 15 Z M2 24 L6 22 L5 30 Z" fill="#c04848"/>
<ellipse cx="14" cy="32" rx="9" ry="7" fill="#c8a486"/>
<ellipse cx="18" cy="20" rx="10" ry="11.5" fill="#dccaa8"/>
<ellipse cx="19" cy="12.5" rx="7.5" ry="6" fill="#ece2cc"/>
<circle cx="11.5" cy="10.5" r="3.2" fill="#e4d6ba"/>
<circle cx="26" cy="10" r="3" fill="#e0d2b6"/>
<ellipse cx="19.5" cy="22" rx="5.5" ry="4" fill="#f0e6d2"/>
<circle cx="16" cy="16.5" r="1" fill="#5a4838"/>
<circle cx="22.5" cy="16" r="1" fill="#5a4838"/>
<ellipse cx="20" cy="20" rx="1.4" ry="1.1" fill="#3a2a22"/>
<ellipse cx="12" cy="27" rx="4.5" ry="5.5" fill="#d6bc9a"/>
<path d="M19 30 L29 22 L35 29 L25 37 Z" fill="#c8463a"/>
<path d="M20.6 31.6 L30 24 M22.6 33.6 L32 26 M24.6 35.6 L34 28" stroke="#eeb49c" stroke-width="1"/>
<path d="M27 21 L32 17 L36 22 L31 26 Z" fill="#b8b8ac"/>
<ellipse cx="21" cy="38" rx="8" ry="3.5" fill="#b85a50"/>
</g></g>
<circle cx="20" cy="20" r="19.5" fill="none" stroke="rgba(0,0,0,0.06)" stroke-width="1"/>
</svg>
<div class="t" style="left:301px;top:456px;font-size:14px;color:#2e2e2e;font-weight:bold;font-family:'Liberation Sans', sans-serif;"><i style="width:12px">M</i><i style="width:8px">e</i><i style="width:5px">r</i><i style="width:9px">g</i><i style="width:8px">e</i><i style="width:4px">&nbsp;</i><i style="width:9px">b</i><i style="width:5px">r</i><i style="width:8px">a</i><i style="width:9px">n</i><i style="width:8px">c</i><i style="width:9px">h</i><i style="width:4px">&nbsp;</i><i style="width:3px">&#x27;</i><i style="width:8px">e</i><i style="width:9px">p</i><i style="width:4px">i</i><i style="width:8px">c</i><i style="width:4px">/</i><i style="width:11px">w</i><i style="width:8px">a</i><i style="width:4px">l</i><i style="width:4px">l</i><i style="width:8px">e</i><i style="width:5px">t</i><i style="width:5px">-</i><i style="width:8px">8</i><i style="width:8px">0</i><i style="width:3px">&#x27;</i><i style="width:4px">&nbsp;</i><i style="width:4px">i</i><i style="width:9px">n</i><i style="width:5px">t</i><i style="width:9px">o</i><i style="width:4px">&nbsp;</i><i style="width:5px">t</i><i style="width:9px">o</i><i style="width:8px">k</i><i style="width:8px">e</i><i style="width:9px">n</i><i style="width:5px">-</i><i style="width:9px">o</i><i style="width:9px">n</i><i style="width:9px">b</i><i style="width:9px">o</i><i style="width:8px">a</i><i style="width:5px">r</i><i style="width:9px">d</i><i style="width:4px">i</i><i style="width:9px">n</i><i style="width:9px">g</i><i style="width:5px">-</i><i style="width:8px">2</i><i style="width:8px">3</i><i style="width:8px">3</i><i style="width:8px">1</i></div>
<div class="t" style="left:301px;top:477px;font-size:14px;color:#2e2e2e;font-weight:normal;font-family:'Liberation Sans', sans-serif;"><i style="width:11px">O</i><i style="width:3px">l</i><i style="width:3px">i</i><i style="width:7px">v</i><i style="width:3px">i</i><i style="width:8px">a</i><i style="width:4px">&nbsp;</i><i style="width:12px">M</i><i style="width:8px">a</i><i style="width:8px">d</i><i style="width:5px">r</i><i style="width:3px">i</i><i style="width:8px">d</i><i style="width:4px">&nbsp;</i><b style="color:#919191;font-weight:inherit"><i style="width:8px">a</i><i style="width:8px">u</i><i style="width:4px">t</i><i style="width:8px">h</i><i style="width:8px">o</i><i style="width:5px">r</i><i style="width:8px">e</i><i style="width:8px">d</i><i style="width:4px">&nbsp;</i><i style="width:8px">5</i><i style="width:4px">&nbsp;</i><i style="width:8px">d</i><i style="width:8px">a</i><i style="width:7px">y</i><i style="width:7px">s</i><i style="width:4px">&nbsp;</i><i style="width:8px">a</i><i style="width:8px">g</i><i style="width:8px">o</i></b></div>
<div class="r" style="left:1045px;top:456px;width:122px;height:35px;background:#fafafa;border:1px solid #e5e5e5;border-radius:4px"></div>
<div class="r" style="left:1130px;top:457px;width:36px;height:33px;background:#fff;border-left:1px solid #e5e5e5;border-radius:0 3px 3px 0"></div>
<div class="t" style="left:1056px;top:464px;font-size:13px;color:#2e2e2e;font-weight:normal;font-family:'Liberation Mono', monospace;"><i style="width:8px">8</i><i style="width:8px">f</i><i style="width:8px">3</i><i style="width:8px">a</i><i style="width:8px">c</i><i style="width:8px">a</i><i style="width:8px">e</i><i style="width:8px">b</i></div>
<svg style="left:1136px;top:461px" width="24" height="24" viewBox="0 0 24 24">
<path d="M7 14.7 V7 H14.2 L14.9 7.9" fill="none" stroke="#666" stroke-width="1.8"/>
<rect x="10.9" y="10.9" width="7.2" height="7.2" fill="none" stroke="#666" stroke-width="1.8"/>
</svg>
<div class="r" style="left:237px;top:508px;width:946px;height:1px;background:#f0f0f0"></div>
<svg style="left:253px;top:519px" width="40" height="40" viewBox="0 0 40 40">
<defs><clipPath id="c5"><circle cx="20" cy="20" r="19"/></clipPath>
<filter id="f5" x="-10%" y="-10%" width="120%" height="120%"><feGaussianBlur stdDeviation="0.5"/></filter>
<radialGradient id="g5" cx="0.5" cy="0.5" r="0.6"><stop offset="0" stop-color="#a8403e"/><stop offset="0.75" stop-color="#8e3032"/><stop offset="1" stop-color="#6a1c1e"/></radialGradient></defs>
<g clip-path="url(#c5)">
<rect x="0" y="0" width="40" height="40" fill="url(#g5)"/>
<g filter="url(#f5)">
<path d="M3 14 L9 11 L7 19 Z M31 6 L37 11 L33 15 Z M2 24 L6 22 L5 30 Z" fill="#c04848"/>
<ellipse cx="14" cy="32" rx="9" ry="7" fill="#c8a486"/>
<ellipse cx="18" cy="20" rx="10" ry="11.5" fill="#dccaa8"/>
<ellipse cx="19" cy="12.5" rx="7.5" ry="6" fill="#ece2cc"/>
<circle cx="11.5" cy="10.5" r="3.2" fill="#e4d6ba"/>
<circle cx="26" cy="10" r="3" fill="#e0d2b6"/>
<ellipse cx="19.5" cy="22" rx="5.5" ry="4" fill="#f0e6d2"/>
<circle cx="16" cy="16.5" r="1" fill="#5a4838"/>
<circle cx="22.5" cy="16" r="1" fill="#5a4838"/>
<ellipse cx="20" cy="20" rx="1.4" ry="1.1" fill="#3a2a22"/>
<ellipse cx="12" cy="27" rx="4.5" ry="5.5" fill="#d6bc9a"/>
<path d="M19 30 L29 22 L35 29 L25 37 Z" fill="#c8463a"/>
<path d="M20.6 31.6 L30 24 M22.6 33.6 L32 26 M24.6 35.6 L34 28" stroke="#eeb49c" stroke-width="1"/>
<path d="M27 21 L32 17 L36 22 L31 26 Z" fill="#b8b8ac"/>
<ellipse cx="21" cy="38" rx="8" ry="3.5" fill="#b85a50"/>
</g></g>
<circle cx="20" cy="20" r="19.5" fill="none" stroke="rgba(0,0,0,0.06)" stroke-width="1"/>
</svg>
<div class="t" style="left:301px;top:519px;font-size:14px;color:#2e2e2e;font-weight:bold;font-family:'Liberation Sans', sans-serif;"><i style="width:12px">M</i><i style="width:8px">e</i><i style="width:5px">r</i><i style="width:9px">g</i><i style="width:8px">e</i><i style="width:4px">&nbsp;</i><i style="width:9px">b</i><i style="width:5px">r</i><i style="width:8px">a</i><i style="width:9px">n</i><i style="width:8px">c</i><i style="width:9px">h</i><i style="width:4px">&nbsp;</i><i style="width:3px">&#x27;</i><i style="width:5px">t</i><i style="width:9px">o</i><i style="width:8px">k</i><i style="width:8px">e</i><i style="width:9px">n</i><i style="width:5px">-</i><i style="width:8px">s</i><i style="width:8px">e</i><i style="width:5px">t</i><i style="width:5px">t</i><i style="width:4px">i</i><i style="width:9px">n</i><i style="width:9px">g</i><i style="width:8px">s</i><i style="width:5px">-</i><i style="width:8px">2</i><i style="width:8px">0</i><i style="width:8px">5</i><i style="width:8px">7</i><i style="width:3px">&#x27;</i><i style="width:4px">&nbsp;</i><i style="width:4px">i</i><i style="width:9px">n</i><i style="width:5px">t</i><i style="width:9px">o</i><i style="width:4px">&nbsp;</i><i style="width:5px">t</i><i style="width:9px">o</i><i style="width:8px">k</i><i style="width:8px">e</i><i style="width:9px">n</i><i style="width:5px">-</i><i style="width:9px">o</i><i style="width:9px">n</i><i style="width:9px">b</i><i style="width:9px">o</i><i style="width:8px">a</i><i style="width:5px">r</i><i style="width:9px">d</i><i style="width:4px">i</i><i style="width:9px">n</i><i style="width:9px">g</i><i style="width:5px">-</i><i style="width:8px">2</i><i style="width:8px">3</i><i style="width:8px">3</i><i style="width:8px">1</i></div>
<div class="t" style="left:301px;top:540px;font-size:14px;color:#2e2e2e;font-weight:normal;font-family:'Liberation Sans', sans-serif;"><i style="width:11px">O</i><i style="width:3px">l</i><i style="width:3px">i</i><i style="width:7px">v</i><i style="width:3px">i</i><i style="width:8px">a</i><i style="width:4px">&nbsp;</i><i style="width:12px">M</i><i style="width:8px">a</i><i style="width:8px">d</i><i style="width:5px">r</i><i style="width:3px">i</i><i style="width:8px">d</i><i style="width:4px">&nbsp;</i><b style="color:#919191;font-weight:inherit"><i style="width:8px">a</i><i style="width:8px">u</i><i style="width:4px">t</i><i style="width:8px">h</i><i style="width:8px">o</i><i style="width:5px">r</i><i style="width:8px">e</i><i style="width:8px">d</i><i style="width:4px">&nbsp;</i><i style="width:8px">5</i><i style="width:4px">&nbsp;</i><i style="width:8px">d</i><i style="width:8px">a</i><i style="width:7px">y</i><i style="width:7px">s</i><i style="width:4px">&nbsp;</i><i style="width:8px">a</i><i style="width:8px">g</i><i style="width:8px">o</i></b></div>
<div class="r" style="left:1045px;top:519px;width:122px;height:35px;background:#fafafa;border:1px solid #e5e5e5;border-radius:4px"></div>
<div class="r" style="left:1130px;top:520px;width:36px;height:33px;background:#fff;border-left:1px solid #e5e5e5;border-radius:0 3px 3px 0"></div>
<div class="t" style="left:1056px;top:527px;font-size:13px;color:#2e2e2e;font-weight:normal;font-family:'Liberation Mono', monospace;"><i style="width:8px">f</i><i style="width:8px">a</i><i style="width:8px">6</i><i style="width:8px">2</i><i style="width:8px">c</i><i style="width:8px">f</i><i style="width:8px">d</i><i style="width:8px">7</i></div>
<svg style="left:1136px;top:524px" width="24" height="24" viewBox="0 0 24 24">
<path d="M7 14.7 V7 H14.2 L14.9 7.9" fill="none" stroke="#666" stroke-width="1.8"/>
<rect x="10.9" y="10.9" width="7.2" height="7.2" fill="none" stroke="#666" stroke-width="1.8"/>
</svg>
<div class="r" style="left:237px;top:571px;width:946px;height:1px;background:#f0f0f0"></div>
<svg style="left:253px;top:582px" width="40" height="40" viewBox="0 0 40 40">
<defs><clipPath id="c6"><circle cx="20" cy="20" r="19"/></clipPath>
<filter id="f6" x="-10%" y="-10%" width="120%" height="120%"><feGaussianBlur stdDeviation="0.5"/></filter>
<radialGradient id="g6" cx="0.5" cy="0.5" r="0.6"><stop offset="0" stop-color="#a8403e"/><stop offset="0.75" stop-color="#8e3032"/><stop offset="1" stop-color="#6a1c1e"/></radialGradient></defs>
<g clip-path="url(#c6)">
<rect x="0" y="0" width="40" height="40" fill="url(#g6)"/>
<g filter="url(#f6)">
<path d="M3 14 L9 11 L7 19 Z M31 6 L37 11 L33 15 Z M2 24 L6 22 L5 30 Z" fill="#c04848"/>
<ellipse cx="14" cy="32" rx="9" ry="7" fill="#c8a486"/>
<ellipse cx="18" cy="20" rx="10" ry="11.5" fill="#dccaa8"/>
<ellipse cx="19" cy="12.5" rx="7.5" ry="6" fill="#ece2cc"/>
<circle cx="11.5" cy="10.5" r="3.2" fill="#e4d6ba"/>
<circle cx="26" cy="10" r="3" fill="#e0d2b6"/>
<ellipse cx="19.5" cy="22" rx="5.5" ry="4" fill="#f0e6d2"/>
<circle cx="16" cy="16.5" r="1" fill="#5a4838"/>
<circle cx="22.5" cy="16" r="1" fill="#5a4838"/>
<ellipse cx="20" cy="20" rx="1.4" ry="1.1" fill="#3a2a22"/>
<ellipse cx="12" cy="27" rx="4.5" ry="5.5" fill="#d6bc9a"/>
<path d="M19 30 L29 22 L35 29 L25 37 Z" fill="#c8463a"/>
<path d="M20.6 31.6 L30 24 M22.6 33.6 L32 26 M24.6 35.6 L34 28" stroke="#eeb49c" stroke-width="1"/>
<path d="M27 21 L32 17 L36 22 L31 26 Z" fill="#b8b8ac"/>
<ellipse cx="21" cy="38" rx="8" ry="3.5" fill="#b85a50"/>
</g></g>
<circle cx="20" cy="20" r="19.5" fill="none" stroke="rgba(0,0,0,0.06)" stroke-width="1"/>
</svg>
<div class="t" style="left:301px;top:582px;font-size:14px;color:#2e2e2e;font-weight:bold;font-family:'Liberation Sans', sans-serif;"><i style="width:5px">r</i><i style="width:8px">e</i><i style="width:12px">m</i><i style="width:9px">o</i><i style="width:8px">v</i><i style="width:8px">e</i><i style="width:9px">d</i><i style="width:4px">&nbsp;</i><i style="width:9px">b</i><i style="width:9px">u</i><i style="width:5px">t</i><i style="width:5px">t</i><i style="width:9px">o</i><i style="width:9px">n</i><i style="width:4px">&nbsp;</i><i style="width:9px">d</i><i style="width:4px">i</i><i style="width:8px">s</i><i style="width:8px">a</i><i style="width:9px">b</i><i style="width:4px">l</i><i style="width:4px">i</i><i style="width:9px">n</i><i style="width:9px">g</i><i style="width:4px">&nbsp;</i><i style="width:5px">f</i><i style="width:9px">o</i><i style="width:5px">r</i><i style="width:4px">&nbsp;</i><i style="width:9px">n</i><i style="width:9px">o</i><i style="width:11px">w</i></div>
<div class="t" style="left:301px;top:603px;font-size:14px;color:#2e2e2e;font-weight:normal;font-family:'Liberation Sans', sans-serif;"><i style="width:11px">O</i><i style="width:3px">l</i><i style="width:3px">i</i><i style="width:7px">v</i><i style="width:3px">i</i><i style="width:8px">a</i><i style="width:4px">&nbsp;</i><i style="width:12px">M</i><i style="width:8px">a</i><i style="width:8px">d</i><i style="width:5px">r</i><i style="width:3px">i</i><i style="width:8px">d</i><i style="width:4px">&nbsp;</i><b style="color:#919191;font-weight:inherit"><i style="width:8px">a</i><i style="width:8px">u</i><i style="width:4px">t</i><i style="width:8px">h</i><i style="width:8px">o</i><i style="width:5px">r</i><i style="width:8px">e</i><i style="width:8px">d</i><i style="width:4px">&nbsp;</i><i style="width:8px">5</i><i style="width:4px">&nbsp;</i><i style="width:8px">d</i><i style="width:8px">a</i><i style="width:7px">y</i><i style="width:7px">s</i><i style="width:4px">&nbsp;</i><i style="width:8px">a</i><i style="width:8px">g</i><i style="width:8px">o</i></b></div>
<div class="r" style="left:1045px;top:582px;width:122px;height:35px;background:#fafafa;border:1px solid #e5e5e5;border-radius:4px"></div>
<div class="r" style="left:1130px;top:583px;width:36px;height:33px;background:#fff;border-left:1px solid #e5e5e5;border-radius:0 3px 3px 0"></div>
<div class="t" style="left:1056px;top:590px;font-size:13px;color:#2e2e2e;font-weight:normal;font-family:'Liberation Mono', monospace;"><i style="width:8px">b</i><i style="width:8px">3</i><i style="width:8px">c</i><i style="width:8px">c</i><i style="width:8px">c</i><i style="width:8px">5</i><i style="width:8px">b</i><i style="width:8px">c</i></div>
<svg style="left:1136px;top:587px" width="24" height="24" viewBox="0 0 24 24">
<path d="M7 14.7 V7 H14.2 L14.9 7.9" fill="none" stroke="#666" stroke-width="1.8"/>
<rect x="10.9" y="10.9" width="7.2" height="7.2" fill="none" stroke="#666" stroke-width="1.8"/>
</svg>
</body></html>
